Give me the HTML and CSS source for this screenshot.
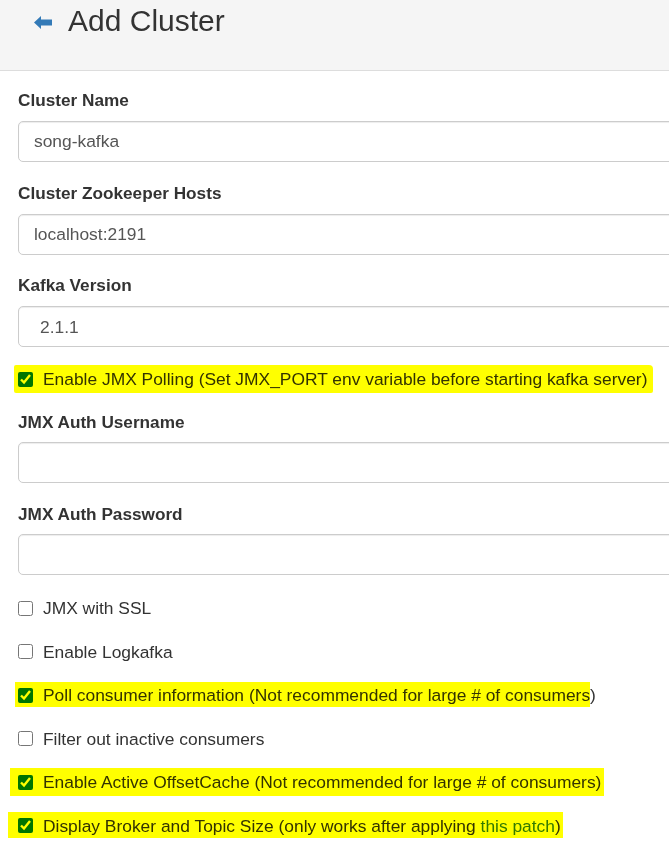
FILE: index.html
```html
<!DOCTYPE html>
<html>
<head>
<meta charset="utf-8">
<title>Add Cluster</title>
<link rel="stylesheet" href="styles.css">
</head>
<body>
<div class="page-header">
  <a class="back" href="#">
    <svg width="18" height="13" viewBox="0 0 18 13"><path d="M0 6.5 L7 0 L7 3.5 L18 3.5 L18 9.5 L7 9.5 L7 13 Z" fill="#337ab7"/></svg>
  </a>
  <h2 class="title">Add Cluster</h2>
</div>
<form class="form">
  <div class="form-group">
    <label class="label">Cluster Name</label>
    <input class="form-control" type="text" value="song-kafka">
  </div>
  <div class="form-group">
    <label class="label">Cluster Zookeeper Hosts</label>
    <input class="form-control" type="text" value="localhost:2191">
  </div>
  <div class="form-group form-group-last">
    <label class="label">Kafka Version</label>
    <div class="form-control select">2.1.1</div>
  </div>
  <div class="checkbox cb-first">
    <span class="hl hl-1"><input type="checkbox" checked><span>Enable JMX Polling (Set JMX_PORT env variable before starting kafka server)</span></span>
  </div>
  <div class="form-group form-group-tight">
    <label class="label">JMX Auth Username</label>
    <input class="form-control" type="text">
  </div>
  <div class="form-group form-group-end">
    <label class="label">JMX Auth Password</label>
    <input class="form-control" type="password">
  </div>
  <div class="checklist">
    <div class="checkbox"><input type="checkbox"><span>JMX with SSL</span></div>
    <div class="checkbox"><input type="checkbox"><span>Enable Logkafka</span></div>
    <div class="checkbox"><span class="hl hl-2"><input type="checkbox" checked><span>Poll consumer information (Not recommended for large # of consumers</span></span><span>)</span></div>
    <div class="checkbox"><input type="checkbox"><span>Filter out inactive consumers</span></div>
    <div class="checkbox"><span class="hl hl-3"><input type="checkbox" checked><span>Enable Active OffsetCache (Not recommended for large # of consumers)</span></span></div>
    <div class="checkbox"><span class="hl hl-4"><input type="checkbox" checked><span>Display Broker and Topic Size (only works after applying <a class="link" href="#">this patch</a>)</span></span></div>
  </div>
</form>
</body>
</html>
```
FILE: styles.css
```css
html, body {
  margin: 0;
  padding: 0;
  background: #fff;
  overflow: hidden;
}
body {
  font-family: "Liberation Sans", Arial, sans-serif;
  font-size: 17.4px;
  line-height: 24px;
  color: #333;
}
.page-header {
  height: 70px;
  background: #f5f5f5;
  border-bottom: 1px solid #ddd;
  display: flex;
  align-items: flex-start;
  padding-left: 34px;
}
.back {
  display: block;
  margin-top: 16px;
  width: 18px;
  height: 13px;
}
.back svg { display: block; }
.title {
  margin: 3px 0 0 16px;
  font-size: 30px;
  line-height: 36px;
  font-weight: normal;
  color: #333;
}
.form {
  padding: 17px 0 0 18px;
  width: 720px;
}
.form-group {
  margin-bottom: 18.5px;
}
.form-group-last {
  margin-bottom: 20px;
}
.form-group-tight .label {
  margin-bottom: 8px;
}
.form-group-end {
  margin-bottom: 21.5px;
}
.form-group-end .label {
  margin-bottom: 8px;
}
.label {
  display: block;
  font-weight: bold;
  font-size: 17.2px;
  margin-bottom: 9px;
}
.form-control {
  display: block;
  box-sizing: border-box;
  width: 700px;
  height: 41px;
  padding: 8px 15px;
  font-family: "Liberation Sans", Arial, sans-serif;
  font-size: 17.4px;
  line-height: 24px;
  color: #555;
  background: #fff;
  border: 1px solid #ccc;
  border-radius: 5px;
  box-shadow: inset 0 1px 1px rgba(0,0,0,.075);
  outline: none;
  margin: 0;
}
.select {
  padding-left: 21px;
}
.checkbox {
  display: flex;
  align-items: center;
  height: 24px;
  white-space: nowrap;
}
.checkbox input {
  width: 15px;
  height: 15px;
  margin: 0 10px 0 0;
  flex: none;
}
.cb-first {
  margin-bottom: 19px;
}
.checklist {
  display: flex;
  flex-direction: column;
  gap: 19.6px;
}
.hl {
  position: relative;
  display: flex;
  align-items: center;
}
.hl::after {
  content: "";
  position: absolute;
  background: #ffff00;
  mix-blend-mode: multiply;
  pointer-events: none;
}
.hl-1::after { left: -4px; right: -6px; top: -2px; bottom: -2px; border-radius: 2px 4px 2px 2px; }
.hl-2::after { left: -3px; right: 0; top: -1px; bottom: 0; }
.hl-3::after { left: -8px; right: -3px; top: -2px; bottom: -2px; }
.hl-4::after { left: -10px; right: -2px; top: -2px; bottom: -2px; }
.link {
  color: #337ab7;
  text-decoration: none;
}
```
